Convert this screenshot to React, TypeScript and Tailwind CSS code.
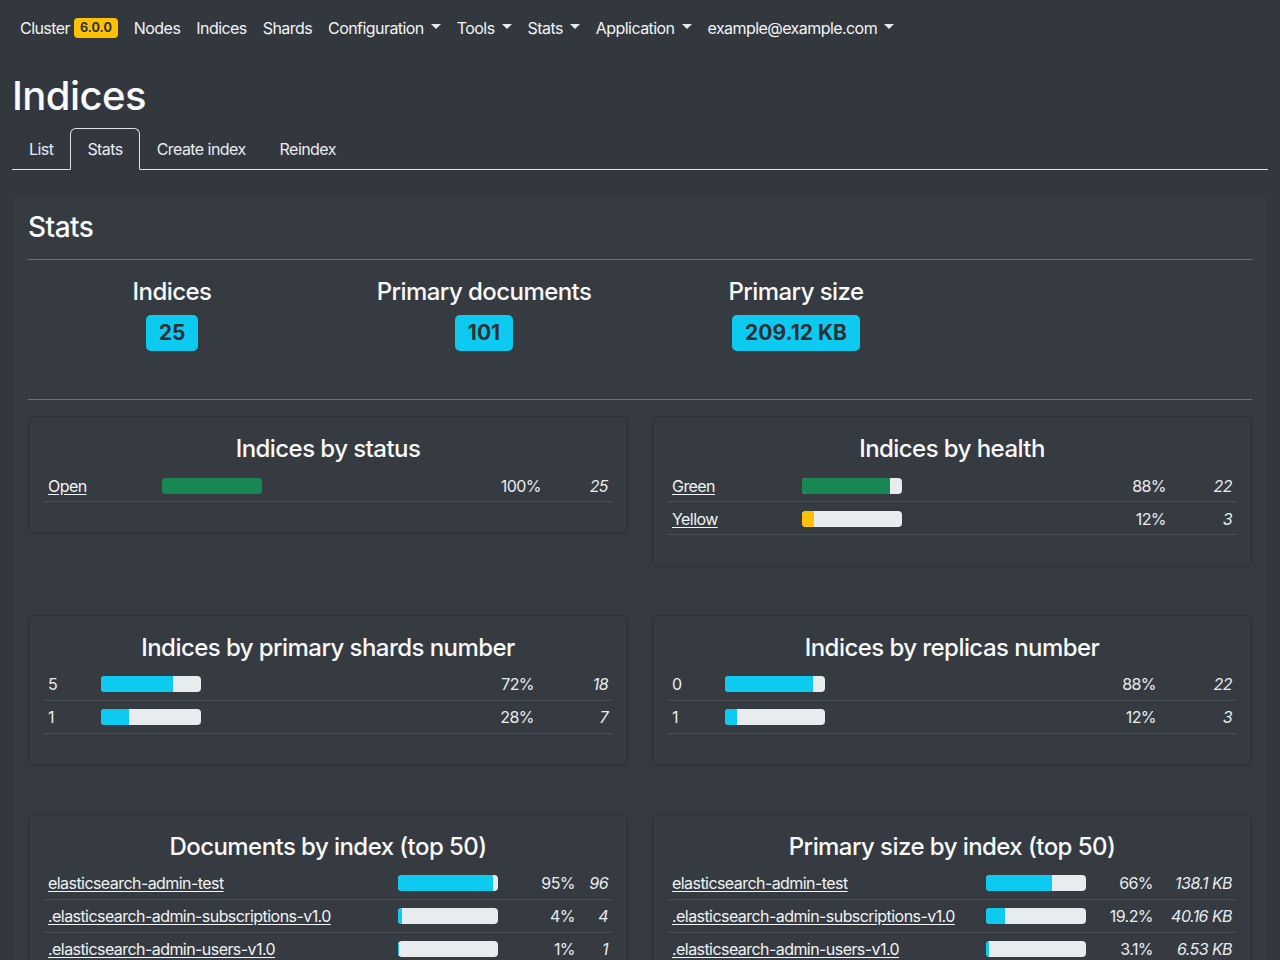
import React from "react";

type Row = {
  label: string;
  link?: boolean;
  pct: string;
  fill: number;
  color: string;
  count: string;
};

type TableSpec = {
  title: string;
  labelW: number;
  pctW: number;
  countW: number;
  rows: Row[];
};

const GREEN = "#198754";
const YELLOW = "#ffc107";
const CYAN = "#0dcaf0";

function Caret() {
  return (
    <span className="ml-[7px] inline-block h-0 w-0 translate-y-[-2px] border-x-[5px] border-t-[5px] border-x-transparent border-t-[#e9ecef] align-middle" />
  );
}

function Bar({ fill, color }: { fill: number; color: string }) {
  return (
    <div className="flex h-4 w-[100px] overflow-hidden rounded-[4px] bg-[#e9ecef]">
      <div style={{ width: `${fill}%`, backgroundColor: color }} className="h-full" />
    </div>
  );
}

function StatTable({ spec }: { spec: TableSpec }) {
  return (
    <div className="rounded-[6px] border border-[#2c3137] p-[15px]">
      <h4 className="mb-[5px] pt-[3px] text-center text-[24px] leading-[28.8px] font-medium text-[#f8f9fa]">
        {spec.title}
      </h4>
      <div className="mb-4">
        {spec.rows.map((r, i) => (
          <div key={i} className="flex h-[33px] items-center border-b border-[#4a5057] pt-[1px]">
            <div className="shrink-0 px-1 leading-6" style={{ width: spec.labelW }}>
              {r.link ? (
                <a href="#" className="whitespace-nowrap text-[#f1f3f5] underline underline-offset-[2px]">
                  {r.label}
                </a>
              ) : (
                <span>{r.label}</span>
              )}
            </div>
            <div className="flex-1 px-1">
              <Bar fill={r.fill} color={r.color} />
            </div>
            <div className="shrink-0 px-1 text-right leading-6" style={{ width: spec.pctW }}>
              {r.pct}
            </div>
            <div className="shrink-0 px-1 text-right italic leading-6" style={{ width: spec.countW }}>
              {r.count}
            </div>
          </div>
        ))}
      </div>
    </div>
  );
}

const status: TableSpec = {
  title: "Indices by status",
  labelW: 114,
  pctW: 80,
  countW: 67,
  rows: [{ label: "Open", link: true, pct: "100%", fill: 100, color: GREEN, count: "25" }],
};

const health: TableSpec = {
  title: "Indices by health",
  labelW: 130,
  pctW: 80,
  countW: 66,
  rows: [
    { label: "Green", link: true, pct: "88%", fill: 88, color: GREEN, count: "22" },
    { label: "Yellow", link: true, pct: "12%", fill: 12, color: YELLOW, count: "3" },
  ],
};

const shards: TableSpec = {
  title: "Indices by primary shards number",
  labelW: 53,
  pctW: 80,
  countW: 74,
  rows: [
    { label: "5", pct: "72%", fill: 72, color: CYAN, count: "18" },
    { label: "1", pct: "28%", fill: 28, color: CYAN, count: "7" },
  ],
};

const replicas: TableSpec = {
  title: "Indices by replicas number",
  labelW: 53,
  pctW: 80,
  countW: 76,
  rows: [
    { label: "0", pct: "88%", fill: 88, color: CYAN, count: "22" },
    { label: "1", pct: "12%", fill: 12, color: CYAN, count: "3" },
  ],
};

const docs: TableSpec = {
  title: "Documents by index (top 50)",
  labelW: 350,
  pctW: 75,
  countW: 33,
  rows: [
    { label: "elasticsearch-admin-test", link: true, pct: "95%", fill: 95, color: CYAN, count: "96" },
    { label: ".elasticsearch-admin-subscriptions-v1.0", link: true, pct: "4%", fill: 4, color: CYAN, count: "4" },
    { label: ".elasticsearch-admin-users-v1.0", link: true, pct: "1%", fill: 1, color: CYAN, count: "1" },
  ],
};

const sizes: TableSpec = {
  title: "Primary size by index (top 50)",
  labelW: 314,
  pctW: 65,
  countW: 79,
  rows: [
    { label: "elasticsearch-admin-test", link: true, pct: "66%", fill: 66, color: CYAN, count: "138.1 KB" },
    { label: ".elasticsearch-admin-subscriptions-v1.0", link: true, pct: "19.2%", fill: 19.2, color: CYAN, count: "40.16 KB" },
    { label: ".elasticsearch-admin-users-v1.0", link: true, pct: "3.1%", fill: 3.1, color: CYAN, count: "6.53 KB" },
  ],
};

function Summary({ label, value }: { label: string; value: string }) {
  return (
    <div className="flex w-[312px] flex-col items-center">
      <h4 className="mb-[9px] text-[24px] leading-[28.8px] font-medium text-[#f8f9fa]">{label}</h4>
      <span className="rounded-[5px] bg-[#0dcaf0] px-[13px] py-[7px] text-[21px] leading-[22px] font-bold tracking-normal text-[#2b3035]">
        {value}
      </span>
    </div>
  );
}

export default function App() {
  const navItems = ["Configuration", "Tools", "Stats", "Application", "example@example.com"];
  return (
    <div className="min-h-[960px] bg-[#33383f] font-['Inter','Noto_Sans',sans-serif] text-[16px] tracking-[-0.035em] text-[#e9ecef]">
      {/* Navbar */}
      <nav className="flex h-14 items-center pl-3 text-[16px] text-[#f1f3f5]">
        <div className="flex items-center px-2">
          <span>Cluster</span>
          <span className="ml-1 rounded-[4px] bg-[#ffc107] px-[6px] py-[3px] text-[12.5px] leading-[14px] font-bold tracking-normal text-[#2b3035]">
            6.0.0
          </span>
        </div>
        {["Nodes", "Indices", "Shards"].map((n) => (
          <a key={n} href="#" className="px-2">
            {n}
          </a>
        ))}
        {navItems.map((n) => (
          <a key={n} href="#" className="flex items-center px-2">
            {n}
            <Caret />
          </a>
        ))}
      </nav>

      <div className="px-3">
        <h1 className="mt-4 mb-2 text-[40px] leading-[48px] font-medium text-[#f8f9fa]">Indices</h1>

        {/* Tabs */}
        <div className="flex border-b border-[#dee2e6]">
          <a href="#" className="mb-[-1px] border border-transparent px-4 py-2 leading-6">
            List
          </a>
          <a
            href="#"
            className="mb-[-1px] rounded-t-[6px] border border-[#dee2e6] border-b-[#33383f] bg-[#33383f] px-4 py-2 leading-6"
          >
            Stats
          </a>
          <a href="#" className="mb-[-1px] border border-transparent px-4 py-2 leading-6">
            Create index
          </a>
          <a href="#" className="mb-[-1px] border border-transparent px-4 py-2 leading-6">
            Reindex
          </a>
        </div>

        {/* Outer card */}
        <div className="mt-[23px] rounded-[6px] border border-[#30353b] bg-[#363b42] p-[15px]">
          <h3 className="pt-[2px] text-[28px] leading-[33.6px] font-medium text-[#f8f9fa]">Stats</h3>
          <hr className="mt-[14px] mb-[18px] border-t border-[#6c7177]" />
          <div className="-mx-3 flex">
            <Summary label="Indices" value="25" />
            <Summary label="Primary documents" value="101" />
            <Summary label="Primary size" value="209.12 KB" />
          </div>
          <hr className="mt-12 mb-4 border-t border-[#6c7177]" />

          <div className="grid grid-cols-2 items-start gap-x-6 gap-y-12">
            <StatTable spec={status} />
            <StatTable spec={health} />
            <StatTable spec={shards} />
            <StatTable spec={replicas} />
            <StatTable spec={docs} />
            <StatTable spec={sizes} />
          </div>
        </div>
      </div>
    </div>
  );
}
